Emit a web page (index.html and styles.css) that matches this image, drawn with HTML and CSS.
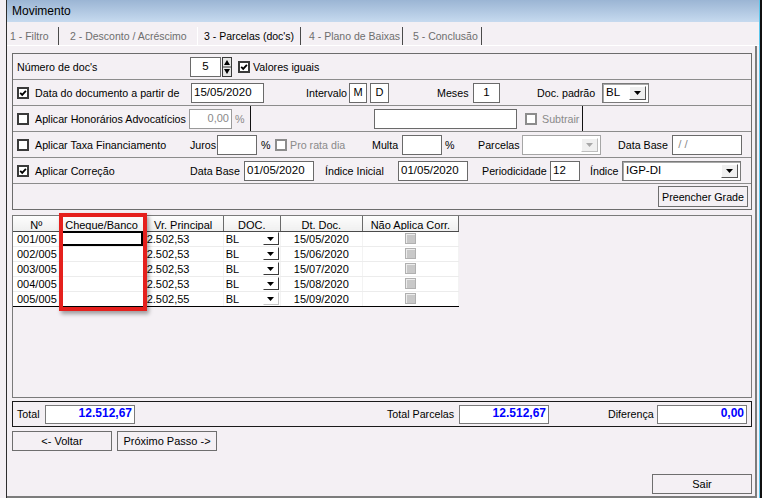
FILE: index.html
```html
<!DOCTYPE html>
<html lang="pt-BR">
<head>
    <meta charset="UTF-8">
    <title>Movimento</title>
    <link rel="stylesheet" href="styles.css">
</head>
<body>
<div class="window">
    <div class="titlebar">Movimento</div>

    <div class="tabs">
        <span class="tab tab-1">1 - Filtro</span>
        <span class="tab tab-2">2 - Desconto / Acréscimo</span>
        <span class="tab tab-3 active">3 - Parcelas (doc's)</span>
        <span class="tab tab-4">4 - Plano de Baixas</span>
        <span class="tab tab-5">5 - Conclusão</span>
    </div>

    <div class="page">
        <div class="form-panel">
            <div class="row row-num">
                <span>Número de doc's</span>
                <span class="field f-num">5</span>
                <span class="spin">
                    <svg width="10" height="20" viewBox="0 0 10 20">
                        <rect x="0.5" y="0.5" width="9" height="19" fill="#e6e6e6" stroke="#3a3a3a"/>
                        <line x1="0" y1="10" x2="10" y2="10" stroke="#3a3a3a"/>
                        <path d="M2 8 L5 3 L8 8 Z" fill="#000"/>
                        <path d="M2 12 L5 17 L8 12 Z" fill="#000"/>
                    </svg>
                </span>
                <span class="cb checked"><svg viewBox="0 0 8 8"><path d="M1.2 3.9 L3.2 5.9 L6.9 1.8"/></svg></span>
                <span>Valores iguais</span>
            </div>

            <div class="row row-data">
                <span class="cb checked"><svg viewBox="0 0 8 8"><path d="M1.2 3.9 L3.2 5.9 L6.9 1.8"/></svg></span>
                <span>Data do documento a partir de</span>
                <span class="field f-date">15/05/2020</span>
                <span>Intervalo</span>
                <span class="field f-letter">M</span>
                <span class="field f-letter">D</span>
                <span>Meses</span>
                <span class="field f-meses">1</span>
                <span>Doc. padrão</span>
                <span class="select s-doc">
                    <span class="val">BL</span>
                    <span class="arrow"><svg width="7" height="4" viewBox="0 0 7 4"><path d="M0 0 H7 L3.5 4 Z"/></svg></span>
                </span>
            </div>

            <div class="row row-hon">
                <span class="cb"></span>
                <span>Aplicar Honorários Advocatícios</span>
                <span class="field f-hon disabled">0,00</span>
                <span class="muted">%</span>
                <span class="vline"></span>
                <span class="field f-hon-desc"></span>
                <span class="cb disabled"></span>
                <span class="muted">Subtrair</span>
                <span class="vline"></span>
            </div>

            <div class="row row-tax">
                <span class="cb"></span>
                <span>Aplicar Taxa Financiamento</span>
                <span>Juros</span>
                <span class="field f-juros"></span>
                <span>%</span>
                <span class="cb disabled"></span>
                <span class="muted">Pro rata dia</span>
                <span>Multa</span>
                <span class="field f-juros"></span>
                <span>%</span>
                <span>Parcelas</span>
                <span class="select s-parc disabled">
                    <span class="val"></span>
                    <span class="arrow"><svg width="7" height="4" viewBox="0 0 7 4"><path d="M0 0 H7 L3.5 4 Z"/></svg></span>
                </span>
                <span>Data Base</span>
                <span class="field f-base muted">&nbsp;/ /</span>
            </div>

            <div class="row row-cor">
                <span class="cb checked"><svg viewBox="0 0 8 8"><path d="M1.2 3.9 L3.2 5.9 L6.9 1.8"/></svg></span>
                <span>Aplicar Correção</span>
                <span>Data Base</span>
                <span class="field f-base">01/05/2020</span>
                <span>Índice Inicial</span>
                <span class="field f-base">01/05/2020</span>
                <span>Periodicidade</span>
                <span class="field f-period">12</span>
                <span>Índice</span>
                <span class="select s-indice">
                    <span class="val">IGP-DI</span>
                    <span class="arrow"><svg width="7" height="4" viewBox="0 0 7 4"><path d="M0 0 H7 L3.5 4 Z"/></svg></span>
                </span>
            </div>

            <div class="row row-btn">
                <button class="btn btn-fill">Preencher Grade</button>
            </div>
        </div>

        <div class="grid-box">
            <table class="grid">
                <colgroup>
                    <col class="c-num"><col class="c-cheque"><col class="c-valor">
                    <col class="c-doc"><col class="c-date"><col class="c-corr">
                </colgroup>
                <thead>
                    <tr>
                        <th><div>Nº</div></th>
                        <th><div>Cheque/Banco</div></th>
                        <th><div>Vr. Principal</div></th>
                        <th><div>DOC.</div></th>
                        <th><div>Dt. Doc.</div></th>
                        <th><div>Não Aplica Corr.</div></th>
                    </tr>
                </thead>
                <tbody>
                    <tr>
                        <td class="t-num">001/005</td>
                        <td class="focus"></td>
                        <td class="t-valor">2.502,53</td>
                        <td><div class="doc"><span>BL</span><span class="dd"><svg width="7" height="4" viewBox="0 0 7 4"><path d="M0 0 H7 L3.5 4 Z"/></svg></span></div></td>
                        <td class="t-date">15/05/2020</td>
                        <td class="t-corr"><span class="mini-cb"></span></td>
                    </tr>
                    <tr>
                        <td class="t-num">002/005</td>
                        <td></td>
                        <td class="t-valor">2.502,53</td>
                        <td><div class="doc"><span>BL</span><span class="dd"><svg width="7" height="4" viewBox="0 0 7 4"><path d="M0 0 H7 L3.5 4 Z"/></svg></span></div></td>
                        <td class="t-date">15/06/2020</td>
                        <td class="t-corr"><span class="mini-cb"></span></td>
                    </tr>
                    <tr>
                        <td class="t-num">003/005</td>
                        <td></td>
                        <td class="t-valor">2.502,53</td>
                        <td><div class="doc"><span>BL</span><span class="dd"><svg width="7" height="4" viewBox="0 0 7 4"><path d="M0 0 H7 L3.5 4 Z"/></svg></span></div></td>
                        <td class="t-date">15/07/2020</td>
                        <td class="t-corr"><span class="mini-cb"></span></td>
                    </tr>
                    <tr>
                        <td class="t-num">004/005</td>
                        <td></td>
                        <td class="t-valor">2.502,53</td>
                        <td><div class="doc"><span>BL</span><span class="dd"><svg width="7" height="4" viewBox="0 0 7 4"><path d="M0 0 H7 L3.5 4 Z"/></svg></span></div></td>
                        <td class="t-date">15/08/2020</td>
                        <td class="t-corr"><span class="mini-cb"></span></td>
                    </tr>
                    <tr>
                        <td class="t-num">005/005</td>
                        <td></td>
                        <td class="t-valor">2.502,55</td>
                        <td><div class="doc"><span>BL</span><span class="dd light"><svg width="7" height="4" viewBox="0 0 7 4"><path d="M0 0 H7 L3.5 4 Z"/></svg></span></div></td>
                        <td class="t-date">15/09/2020</td>
                        <td class="t-corr"><span class="mini-cb"></span></td>
                    </tr>
                </tbody>
            </table>
            <div class="highlight"></div>
        </div>

        <div class="totals">
            <span>Total</span>
            <span class="field f-total">12.512,67</span>
            <span>Total Parcelas</span>
            <span class="field f-total">12.512,67</span>
            <span>Diferença</span>
            <span class="field f-total">0,00</span>
        </div>

        <div class="nav">
            <button class="btn btn-nav">&lt;- Voltar</button>
            <button class="btn btn-nav">Próximo Passo -&gt;</button>
        </div>

        <div class="footer">
            <button class="btn btn-nav">Sair</button>
        </div>
    </div>
</div>
</body>
</html>
```

FILE: styles.css
```css
* {
    box-sizing: border-box;
}
body {
    margin: 0;
    width: 762px;
    height: 498px;
    overflow: hidden;
    background: #f4f0f4;
    font-family: "Liberation Sans", Arial, sans-serif;
    font-size: 11px;
    color: #000;
}
.window {
    margin-left: 6px;
    width: 754px;
    height: 498px;
    border-left: 1px solid #2e2e2e;
    border-right: 1px solid #5cc6ec;
    box-shadow: 2px 0 0 #101010;
    display: flex;
    flex-direction: column;
}
.titlebar {
    height: 22px;
    line-height: 22px;
    padding-left: 5px;
    font-size: 12px;
    background: linear-gradient(#9bb5d4, #c6daef);
}

/* tabs */
.tabs {
    display: flex;
    height: 24px;
    padding-top: 5px;
    border-bottom: 1px solid #fff;
    font-size: 10.5px;
    white-space: nowrap;
}
.tab {
    height: 18px;
    line-height: 18px;
    color: #6e6e6e;
    overflow: hidden;
}
.tab.active {
    color: #000;
}
.tab-1 { width: 52px; padding-left: 3px; border-right: 1px solid #4a4a4a; }
.tab-2 { width: 138px; padding-left: 11px; }
.tab-3 { width: 104px; padding-left: 6px; border-left: 1px solid #fff; border-right: 1px solid #4a4a4a; }
.tab-4 { width: 102px; padding-left: 8px; border-right: 1px solid #4a4a4a; }
.tab-5 { width: 79px; padding-left: 10px; border-right: 1px solid #4a4a4a; }

.page {
    flex: 1;
    display: flex;
    flex-direction: column;
    margin-right: 2px;
    padding: 7px 3px 0 5px;
    border-right: 2px solid #7c7c7c;
    border-bottom: 2px solid #7c7c7c;
}

/* form panel */
.form-panel {
    border: 1px solid #6c6c6c;
    font-size: 10.7px;
}
.row {
    display: grid;
    align-items: center;
    height: 26px;
    padding-left: 4px;
    border-bottom: 1px solid #8c8c8c;
    white-space: nowrap;
}
.row:last-child {
    height: 25px;
    border-bottom: 0;
}
.row-num { grid-template-columns: 173px 32px 16px 15px auto; }
.row-data { grid-template-columns: 18px 156px 115px 43px 21px 67px 36px 64px 65px auto; }
.row-hon { grid-template-columns: 18px 154px 46px 15px 124px 151px 17px 40px auto; }
.row-tax { grid-template-columns: 18px 155px 27px 44px 14px 15px 82px 30px 43px 33px 44px 96px 54px auto; }
.row-cor { grid-template-columns: 18px 155px 54px 81px 73px 84px 68px 40px 32px auto; }
.row-btn {
    display: flex;
    justify-content: flex-end;
    padding-right: 3px;
}
.muted {
    color: #8a8a8a;
}
.vline {
    align-self: stretch;
    border-left: 1px solid #111;
}

.field {
    display: block;
    height: 20px;
    line-height: 17px;
    padding: 0 2px;
    background: #fff;
    border: 1px solid #6a6a6a;
    font-size: 11.5px;
    overflow: hidden;
}
.f-num { width: 31px; text-align: center; }
.f-date { width: 73px; }
.f-letter { width: 18px; text-align: center; font-size: 11px; }
.f-letter + .f-letter { width: 19px; }
.f-meses { width: 27px; text-align: center; }
.f-hon { width: 43px; text-align: right; color: #8a8a8a; border-color: #9a9a9a; font-size: 11px; }
.f-hon-desc { width: 143px; }
.f-juros { width: 40px; }
.f-base { width: 70px; }
.f-period { width: 30px; }
.f-total {
    width: 90px;
    height: 19px;
    text-align: right;
    color: #0000ff;
    font-weight: bold;
    font-size: 12px;
    line-height: 15px;
    border-color: #7a7a7a;
}

.spin {
    display: block;
    width: 10px;
    height: 20px;
}
.spin svg {
    display: block;
}

.cb {
    display: block;
    width: 12px;
    height: 12px;
    border: 2px solid #3a3a3a;
    background: #fff;
}
.cb svg {
    display: block;
    width: 8px;
    height: 8px;
}
.cb svg path {
    fill: none;
    stroke: #000;
    stroke-width: 1.8;
}
.cb.disabled {
    border-color: #8c8c8c;
}

.select {
    display: flex;
    height: 20px;
    background: #fff;
    border: 1px solid #7a7a7a;
    box-shadow: inset 1px 1px 0 #a8a8a8;
}
.select .val {
    flex: 1;
    padding: 2px 0 0 3px;
    font-size: 11.5px;
}
.select .arrow {
    width: 17px;
    margin: 2px 2px 2px 0;
    display: flex;
    align-items: center;
    justify-content: center;
    background: #f0f0f0;
    border: 1px solid #fff;
    border-right-color: #555;
    border-bottom-color: #555;
}
.select .arrow path {
    fill: #000;
}
.s-doc { width: 47px; }
.s-parc { width: 79px; border-color: #a6a6a6; box-shadow: none; }
.s-parc .arrow { border-right-color: #bdbdbd; border-bottom-color: #bdbdbd; }
.s-parc .arrow path { fill: #a8a8a8; }
.s-indice { width: 119px; }

.btn {
    height: 20px;
    padding: 0;
    background: #f4f0f4;
    border: 1px solid #6e6e6e;
    font-family: "Liberation Sans", Arial, sans-serif;
    font-size: 11px;
    color: #000;
}
.btn-fill {
    width: 90px;
    height: 21px;
    font-size: 10.7px;
}
.btn-nav {
    width: 100px;
}

/* grid */
.grid-box {
    position: relative;
    height: 183px;
    margin-top: 5px;
    border: 1px solid #7a7a7a;
}
.grid {
    border-collapse: collapse;
    table-layout: fixed;
    width: 446px;
    background: #fff;
    border-right: 1px solid #000;
    border-bottom: 1px solid #000;
}
.c-num { width: 47px; }
.c-cheque { width: 83px; }
.c-valor { width: 80px; }
.c-doc { width: 57px; }
.c-date { width: 82px; }
.c-corr { width: 96px; }
.grid th {
    height: 15px;
    padding: 0;
    font-weight: normal;
    background: linear-gradient(#fdfdfd, #efefef);
    border-right: 1px solid #6a6a6a;
    border-bottom: 1px solid #4a4a4a;
}
.grid th div {
    height: 14px;
    line-height: 18px;
    overflow: hidden;
    text-align: center;
    white-space: nowrap;
}
.grid td {
    height: 15px;
    padding: 0 2px;
    line-height: 14px;
    white-space: nowrap;
    overflow: hidden;
    border-bottom: 1px solid #ececec;
    border-right: 1px solid #f3f3f3;
}
.grid tr:last-child td {
    border-bottom: 1px solid #000;
}
.grid td.t-num { padding-left: 4px; }
.grid td.t-valor { padding-left: 3px; }
.grid td.t-date { text-align: center; }
.grid td.t-corr { text-align: center; }
.grid td.focus {
    outline: 2px solid #000;
    outline-offset: -2px;
}
.doc {
    display: flex;
    align-items: center;
    justify-content: space-between;
    height: 14px;
}
.dd {
    display: flex;
    align-items: center;
    justify-content: center;
    width: 16px;
    height: 13px;
    background: #fff;
    border: 1px solid #fff;
    border-right-color: #3a3a3a;
    border-bottom-color: #3a3a3a;
    margin-right: -1px;
}
.dd.light {
    border-right-color: #c4c4c4;
    border-bottom-color: #c4c4c4;
}
.dd path {
    fill: #000;
}
.mini-cb {
    display: inline-block;
    width: 11px;
    height: 11px;
    margin-top: 1px;
    vertical-align: top;
    background: #c8c8c8;
    border: 1px solid #b0b0b0;
    box-shadow: inset 1px 1px 0 #ececec;
}
.highlight {
    position: absolute;
    left: 46px;
    top: -3px;
    width: 88px;
    height: 98px;
    border: 4px solid #e5201d;
    box-shadow: 2px 3px 4px rgba(0, 0, 0, 0.35);
}

/* totals and buttons */
.totals {
    display: grid;
    grid-template-columns: 28px 342px 72px 149px 49px auto;
    align-items: center;
    height: 26px;
    margin-top: 3px;
    padding-left: 4px;
    border: 1px solid #1a1a1a;
    font-size: 10.7px;
}
.nav {
    display: flex;
    gap: 5px;
    margin-top: 4px;
}
.footer {
    display: flex;
    justify-content: flex-end;
    margin-top: auto;
    padding-bottom: 2px;
}
```
